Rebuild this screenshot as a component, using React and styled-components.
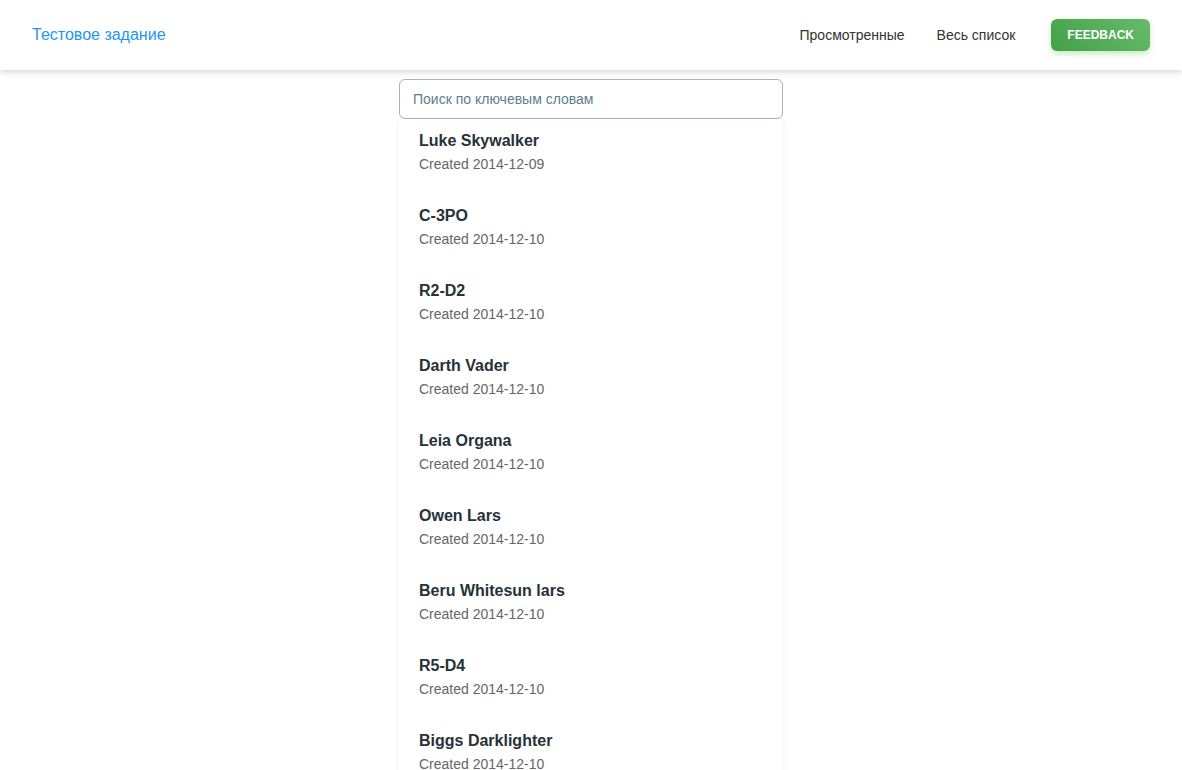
import styled, { createGlobalStyle } from 'styled-components';

const people = [
	{ name: 'Luke Skywalker', created: '2014-12-09' },
	{ name: 'C-3PO', created: '2014-12-10' },
	{ name: 'R2-D2', created: '2014-12-10' },
	{ name: 'Darth Vader', created: '2014-12-10' },
	{ name: 'Leia Organa', created: '2014-12-10' },
	{ name: 'Owen Lars', created: '2014-12-10' },
	{ name: 'Beru Whitesun lars', created: '2014-12-10' },
	{ name: 'R5-D4', created: '2014-12-10' },
	{ name: 'Biggs Darklighter', created: '2014-12-10' },
];

function App() {
	return (
		<>
			<GlobalStyle />
			<Header>
				<Title href="#">Тестовое задание</Title>
				<Nav>
					<NavLink href="#">Просмотренные</NavLink>
					<NavLink href="#">Весь список</NavLink>
					<FeedbackButton type="button">Feedback</FeedbackButton>
				</Nav>
			</Header>
			<Main>
				<SearchInput type="text" placeholder="Поиск по ключевым словам" />
				<List>
					{people.map((person) => (
						<Item key={person.name}>
							<Name>{person.name}</Name>
							<Created>Created {person.created}</Created>
						</Item>
					))}
				</List>
			</Main>
		</>
	);
}

export default App;

const GlobalStyle = createGlobalStyle`
	body {
		margin: 0;
		background: #fff;
		font-family: 'Liberation Sans', Arial, sans-serif;
		overflow: hidden;
	}
`;

const Header = styled.header`
	display: flex;
	align-items: center;
	justify-content: space-between;
	height: 70px;
	padding: 0 32px;
	background: #fff;
	box-shadow: 0 2px 6px rgba(0, 0, 0, 0.16);
	position: relative;
	z-index: 2;
`;

const Title = styled.a`
	font-size: 16px;
	color: #2196f3;
	text-decoration: none;
`;

const Nav = styled.nav`
	display: flex;
	align-items: center;
`;

const NavLink = styled.a`
	font-size: 14px;
	color: #333;
	text-decoration: none;
	padding: 0 16px;
`;

const FeedbackButton = styled.button`
	margin-left: 20px;
	height: 32px;
	padding: 0 16px;
	border: none;
	border-radius: 6px;
	background: linear-gradient(45deg, #43a047 0%, #66bb6a 100%);
	box-shadow: 0 3px 6px rgba(76, 175, 80, 0.3);
	color: #fff;
	font-family: 'Liberation Sans', Arial, sans-serif;
	font-size: 12px;
	font-weight: bold;
	text-transform: uppercase;
	cursor: pointer;
`;

const Main = styled.main`
	display: flex;
	flex-direction: column;
	width: 384px;
	margin: 9px auto 0;
`;

const SearchInput = styled.input`
	box-sizing: border-box;
	height: 40px;
	padding: 0 13px;
	border: 1px solid #a3b4bf;
	border-radius: 6px;
	font-family: 'Liberation Sans', Arial, sans-serif;
	font-size: 14px;
	outline: none;

	&::placeholder {
		color: #607d8b;
	}
`;

const List = styled.ul`
	list-style: none;
	margin: 0;
	padding: 0;
	background: #fff;
	box-shadow: 0 2px 6px rgba(0, 0, 0, 0.07);
`;

const Item = styled.li`
	display: flex;
	flex-direction: column;
	gap: 5px;
	padding: 12px 20px 22px;
`;

const Name = styled.span`
	font-size: 16px;
	line-height: 20px;
	font-weight: bold;
	color: #263238;
`;

const Created = styled.span`
	font-size: 14px;
	line-height: 16px;
	color: #666;
`;
